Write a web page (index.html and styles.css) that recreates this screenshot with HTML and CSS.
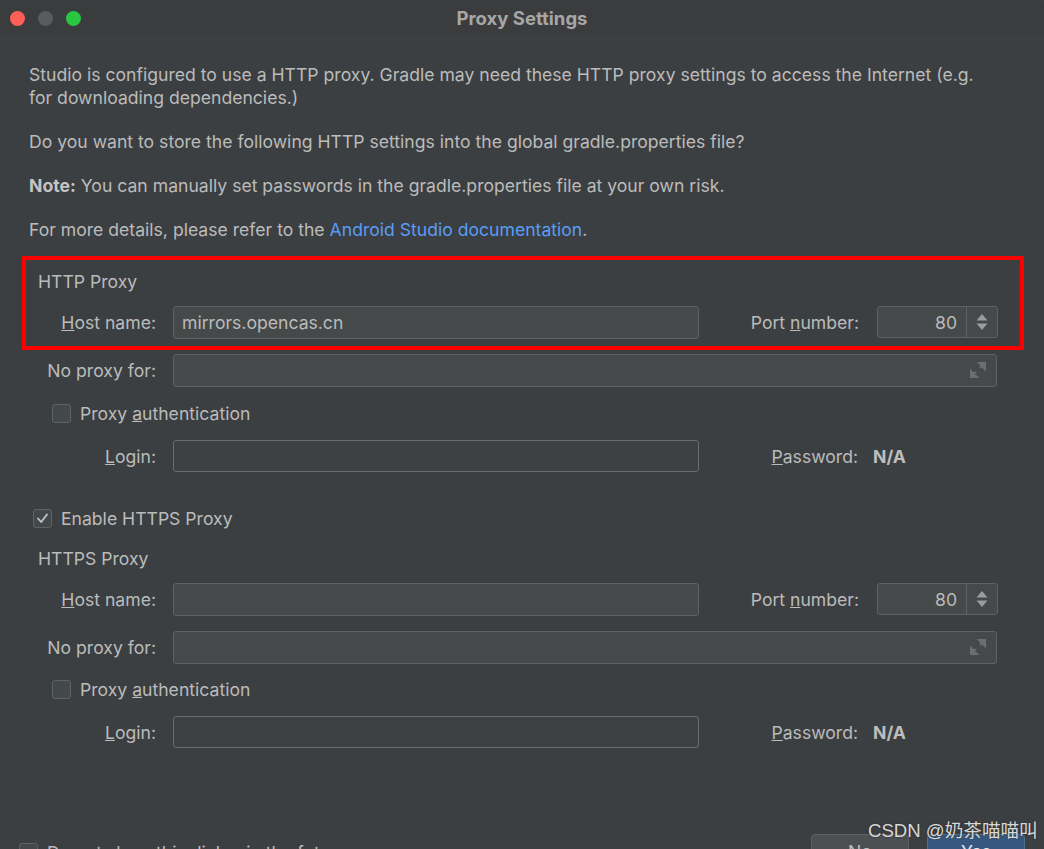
FILE: index.html
```html
<!DOCTYPE html>
<html>
<head>
<meta charset="utf-8">
<link rel="stylesheet" href="styles.css">
</head>
<body>
<div class="window">
  <div class="titlebar">
    <div class="lights">
      <span class="light red"></span>
      <span class="light gray"></span>
      <span class="light green"></span>
    </div>
    <div class="title">Proxy Settings</div>
  </div>

  <div class="content">
    <p class="para">Studio is configured to use a HTTP proxy. Gradle may need these HTTP proxy settings to access the Internet (e.g. for downloading dependencies.)</p>
    <p class="para">Do you want to store the following HTTP settings into the global gradle.properties file?</p>
    <p class="para"><b>Note:</b> You can manually set passwords in the gradle.properties file at your own risk.</p>
    <p class="para">For more details, please refer to the <span class="link">Android Studio documentation</span>.</p>

    <div class="section http">
      <div class="group-title">HTTP Proxy</div>
      <div class="row r-host">
        <label class="lbl"><u>H</u>ost name:</label>
        <div class="field host">mirrors.opencas.cn</div>
        <label class="lbl port-lbl">Port <u>n</u>umber:</label>
        <div class="spinner"><span class="val">80</span><span class="arrows"><svg width="14" height="20" viewBox="0 0 14 20"><path d="M7 2 L12.5 8.5 H1.5 Z M7 18 L12.5 11.5 H1.5 Z" fill="#9a9c9e"/></svg></span></div>
      </div>
      <div class="row r-noproxy">
        <label class="lbl">No proxy for:</label>
        <div class="field wide"><svg class="expand" width="18" height="18" viewBox="0 0 18 18"><path d="M10 2 H16 V8 Z M16 2 L11 7 M8 16 H2 V10 Z M2 16 L7 11" fill="#6c6f71" stroke="#6c6f71" stroke-width="2"/></svg></div>
      </div>
      <div class="row r-check">
        <span class="cb"></span><span class="cb-text">Proxy <u>a</u>uthentication</span>
      </div>
      <div class="row r-login">
        <label class="lbl"><u>L</u>ogin:</label>
        <div class="field login"></div>
        <label class="lbl pw-lbl"><u>P</u>assword:</label>
        <span class="na">N/A</span>
      </div>
    </div>

    <div class="row r-enable">
      <span class="cb checked"><svg width="15" height="15" viewBox="0 0 15 15"><path d="M3 7.5 L6.2 11 L12 3.5" fill="none" stroke="#c5c5c5" stroke-width="1.8" stroke-linecap="round" stroke-linejoin="round"/></svg></span><span class="cb-text">Enable HTTPS Proxy</span>
    </div>

    <div class="section https">
      <div class="group-title">HTTPS Proxy</div>
      <div class="row r-host2">
        <label class="lbl"><u>H</u>ost name:</label>
        <div class="field host"></div>
        <label class="lbl port-lbl">Port <u>n</u>umber:</label>
        <div class="spinner"><span class="val">80</span><span class="arrows"><svg width="14" height="20" viewBox="0 0 14 20"><path d="M7 2 L12.5 8.5 H1.5 Z M7 18 L12.5 11.5 H1.5 Z" fill="#9a9c9e"/></svg></span></div>
      </div>
      <div class="row r-noproxy2">
        <label class="lbl">No proxy for:</label>
        <div class="field wide"><svg class="expand" width="18" height="18" viewBox="0 0 18 18"><path d="M10 2 H16 V8 Z M16 2 L11 7 M8 16 H2 V10 Z M2 16 L7 11" fill="#6c6f71" stroke="#6c6f71" stroke-width="2"/></svg></div>
      </div>
      <div class="row r-check2">
        <span class="cb"></span><span class="cb-text">Proxy <u>a</u>uthentication</span>
      </div>
      <div class="row r-login2">
        <label class="lbl"><u>L</u>ogin:</label>
        <div class="field login"></div>
        <label class="lbl pw-lbl"><u>P</u>assword:</label>
        <span class="na">N/A</span>
      </div>
    </div>

    <div class="footer">
      <div class="footer-left">
        <span class="cb"></span><span class="cb-text">Do not show this dialog in the future</span>
      </div>
      <div class="buttons">
        <div class="btn no">No</div>
        <div class="btn yes">Yes</div>
      </div>
    </div>
  </div>

  <div class="redbox"></div>
  <div class="watermark">CSDN @奶茶喵喵叫</div>
</div>
</body>
</html>
```

FILE: styles.css
```css
html, body {
  margin: 0;
  padding: 0;
  background: #3c3f41;
}
.window {
  position: relative;
  width: 1044px;
  height: 849px;
  overflow: hidden;
  background: #3c3f41;
  font-family: "Inter", "Liberation Sans", "Noto Sans CJK SC", sans-serif;
  font-size: 17.6px;
  color: #bbbbbb;
  border-radius: 10px 10px 0 0;
}
.titlebar {
  height: 35px;
  position: relative;
  display: flex;
  align-items: center;
  justify-content: center;
  background: #3b3c3e;
}
.lights {
  position: absolute;
  left: 10px;
  top: 11px;
  display: flex;
  gap: 13px;
}
.light {
  width: 15px;
  height: 15px;
  border-radius: 50%;
  display: block;
}
.light.red { background: #fe5f57; }
.light.gray { background: #5a5b5d; }
.light.green { background: #29c740; }
.title {
  font-weight: bold;
  color: #a6a6a6;
  font-size: 18.5px;
}
.content {
  padding: 0 0 0 29px;
}
.para {
  margin: 0;
  line-height: 23px;
  margin-top: 21px;
  width: 958px;
}
.para:first-child { margin-top: 28px; }
.para b { color: #c4c4c4; }
.link { color: #589df6; }

.section { margin-left: -7px; }
.group-title {
  padding-left: 16px;
  line-height: 23px;
}
.http .group-title { margin-top: 29px; }
.https .group-title { margin-top: 13px; }

.row {
  display: flex;
  align-items: center;
  height: 32px;
}
.lbl {
  width: 134px;
  text-align: right;
  flex: none;
}
.field {
  height: 33px;
  box-sizing: border-box;
  margin-left: 17px;
  background: #45494a;
  border: 1px solid #5f6263;
  border-radius: 3px;
  display: flex;
  align-items: center;
  padding-left: 8px;
  flex: none;
  color: #bbbbbb;
}
.field.host { width: 526px; }
.field.wide { width: 824px; position: relative; }
.field.login { width: 526px; background: #3e4143; border-color: #6a6c6e; height: 32px; }
.expand { position: absolute; right: 9px; top: 6px; }
.port-lbl { width: 160px; }
.spinner {
  margin-left: 18px;
  width: 121px;
  height: 32px;
  box-sizing: border-box;
  background: #45494a;
  border: 1px solid #5f6263;
  border-radius: 3px;
  display: flex;
  align-items: center;
  flex: none;
}
.spinner .val {
  flex: 1;
  text-align: right;
  padding-right: 9px;
}
.spinner .arrows {
  width: 30px;
  height: 100%;
  border-left: 1px solid #5f6263;
  display: flex;
  align-items: center;
  justify-content: center;
}
.pw-lbl { width: 159px; text-align: right; }
.na { font-weight: bold; color: #bdbdbd; margin-left: 15px; }

.r-host { margin-top: 13px; }
.r-noproxy { margin-top: 16px; }
.r-check { margin-top: 11px; padding-left: 30px; }
.r-login { margin-top: 11px; }
.r-enable { margin-top: 30px; padding-left: 4px; }
.r-host2 { margin-top: 13px; }
.r-noproxy2 { margin-top: 16px; }
.r-check2 { margin-top: 10px; padding-left: 30px; }
.r-login2 { margin-top: 11px; }

.cb {
  width: 19px;
  height: 19px;
  box-sizing: border-box;
  border: 1px solid #606364;
  border-radius: 3px;
  background: #43494a;
  flex: none;
  display: flex;
  align-items: center;
  justify-content: center;
}
.cb-text { margin-left: 9px; }

.footer {
  margin-top: 86px;
  margin-left: -29px;
  display: flex;
  justify-content: space-between;
  align-items: flex-start;
}
.footer-left {
  display: flex;
  align-items: center;
  padding-left: 19px;
  margin-top: 8px;
}
.buttons {
  display: flex;
  gap: 18px;
  margin-right: 19px;
}
.btn {
  width: 98px;
  height: 30px;
  box-sizing: border-box;
  border-radius: 4px;
  display: flex;
  justify-content: center;
  padding-top: 6px;
}
.btn.no { background: #4c5052; border: 1px solid #5e6060; }
.btn.yes { background: #365880; border: 1px solid #4c708c; color: #dfe5ec; }

.redbox {
  position: absolute;
  left: 22px;
  top: 256px;
  width: 1002px;
  height: 94px;
  box-sizing: border-box;
  border: 4px solid #ff0000;
}
.watermark {
  position: absolute;
  left: 868px;
  top: 815px;
  font-family: "Liberation Sans", "Noto Sans CJK SC", sans-serif;
  font-size: 18.6px;
  color: #d8d8d8;
  text-shadow: 0 0 2px #2a2a2a;
  white-space: nowrap;
}
```
